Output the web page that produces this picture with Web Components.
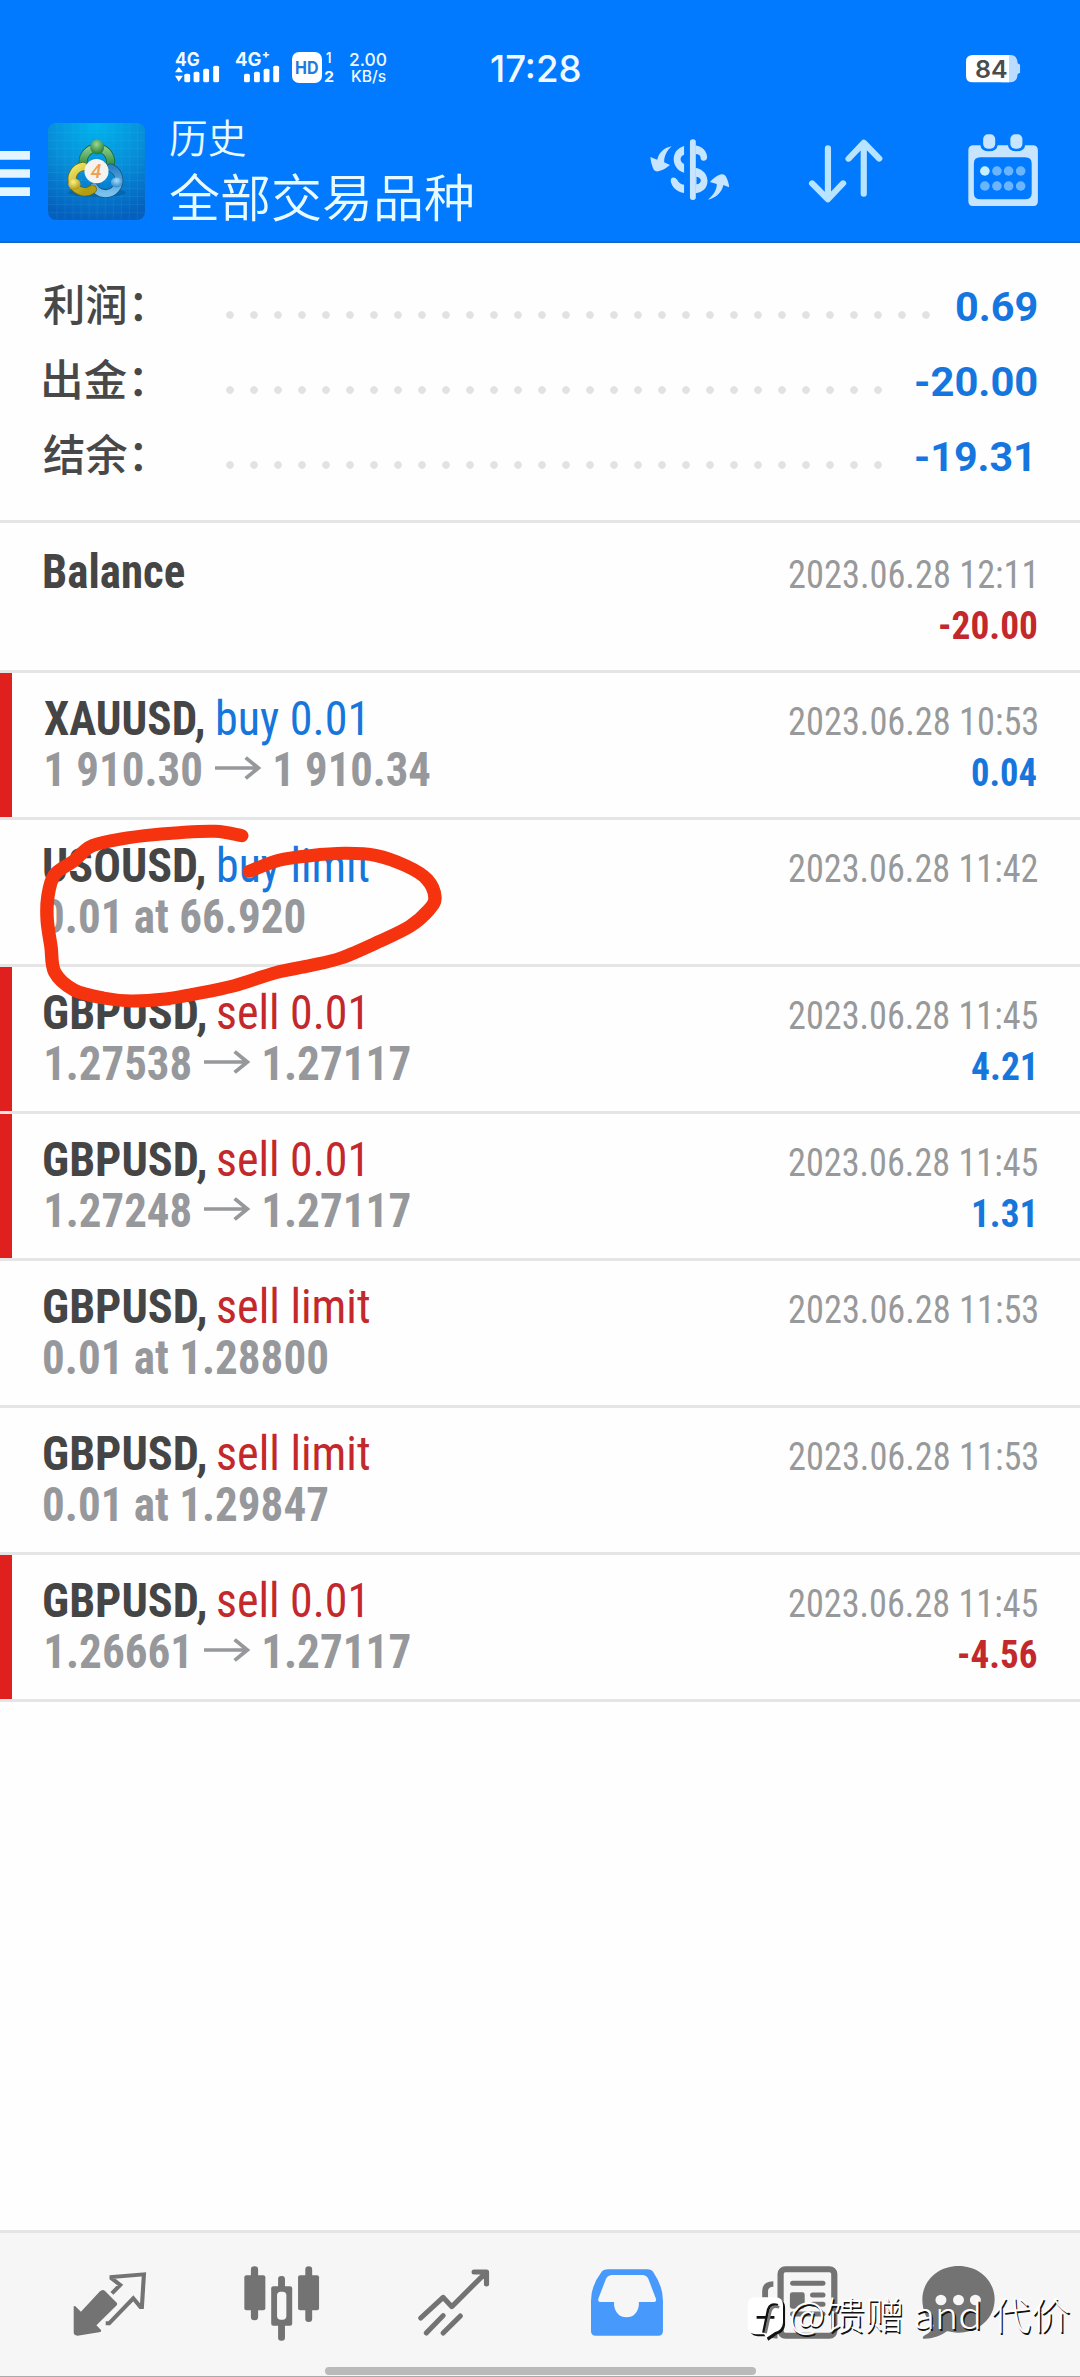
<!DOCTYPE html>
<html lang="zh-CN">
<head>
<meta charset="utf-8">
<title>历史</title>
<style>
html,body{margin:0;background:#fefefe}
body{width:1080px;height:2377px;overflow:hidden;font-family:Roboto,"Noto Sans CJK SC",sans-serif}
</style>
</head>
<body>
<history-app></history-app>
<script>
const mk = (name, html, ready) => customElements.define(name, class extends HTMLElement {
  connectedCallback() {
    if (this.shadowRoot) return;
    const t = document.createElement('template');
    t.innerHTML = typeof html === 'function' ? html(this) : html;
    this.attachShadow({mode: 'open'}).append(t.content.cloneNode(true));
    if (ready) ready(this);
  }
});

/* Text whose inked width is exactly w px; the host's bottom edge is the baseline. */
const ctx = document.createElement('canvas').getContext('2d');
mk('fit-text', e => {
  const g = (k, d) => e.getAttribute(k) || d;
  const size = +g('size', 40), cap = +g('cap', size * .711), w = +g('w', 100);
  const family = g('family', 'Roboto') + ',"Noto Sans CJK SC",sans-serif';
  const weight = g('weight', 400), stretch = g('stretch', 'normal');
  ctx.font = `${weight} ${size}px ${family}`;
  ctx.fontStretch = stretch;
  const m = ctx.measureText(e.textContent);
  const ink = m.actualBoundingBoxLeft + m.actualBoundingBoxRight;
  const s = w / ink, base = size / 2 + (m.fontBoundingBoxAscent - m.fontBoundingBoxDescent) / 2;
  return `<style>:host{display:block;flex:none;width:${w}px;height:${cap}px}
  span{display:block;width:max-content;white-space:nowrap;font:${weight} ${size}px/${size}px ${family};font-stretch:${stretch};
  transform-origin:0 0;transform:translate(${m.actualBoundingBoxLeft * s}px,${cap - base}px) scaleX(${s})}</style><span><slot></slot></span>`;
});

/* Icons: [viewBox, width, height, markup]; the view boxes use 2.904 x 3 units per pixel. */
const K = 2.904;
const bars = (xs) => xs.map((x, i) => `<rect x="${x}" y="${[132,126,117,108][i]}" width="17" height="${158-[132,126,117,108][i]}" rx="5"/>`).join('');
const ICONS = {
  sig1: [508,106,128,52, `<g fill="#fff">${bars([535,562,590,619])}<path d="M519 112L531 128H508ZM508 138H531L519 156Z"/></g>`],
  sig2: [708,106,102,52, `<g fill="#fff">${bars([708,737,765,793])}</g>`],
  menu: [0,362,87,136, `<path fill="#e3f5ff" d="M0 362H87V388H0ZM0 417H87V442H0ZM0 471H87V497H0Z"/>`],
  battery: [1237,75,157,82, `<path fill="#b9dcff" d="M1340 75H1366Q1386 75 1387 100L1394 104V128L1387 132Q1386 157 1366 157H1340Z"/><path fill="#fff" d="M1257 75H1362V157H1257Q1237 157 1237 137V95Q1237 75 1257 75Z"/>`],
  money: [320,326,230,184, `<g fill="#c8e5ff"><rect x="436" y="327" width="17" height="182" rx="8"/>
    <path d="M383 348C362 352 346 366 341 388L321 380C323 395 325 407 331 418Q335 424 344 423C357 420 368 413 378 404L361 396C361 378 368 362 383 348Z"/>
    <path d="M488 508C510 503 528 489 533 464L550 471C549 460 546 449 540 438Q537 431 527 432C516 435 504 443 494 455L514 461C514 479 505 494 488 508Z"/>
    <path d="M419 347V373C406 377 405 394 419 401V427C381 416 377 359 419 347Z"/>
    <path d="M382 444Q390 438 399 448Q405 461 419 463V488C398 485 382 468 380 451Z"/>
    <path d="M452 345C472 349 486 363 486 382Q484 392 474 391Q466 390 467 381Q464 371 452 371Z"/>
    <path fill-rule="evenodd" d="M452 412C474 417 487 432 487 452C487 473 473 486 452 489ZM455 439V462C472 460 472 441 455 439Z"/></g>`],
  sort: [782,326,214,192, `<g fill="none" stroke="#b8e4ff" stroke-width="18" stroke-linecap="round" stroke-linejoin="round"><path d="M837 354V505M791 459L837 507L881 459"/><path d="M941 490V338M897 385L941 337L986 385"/></g>`],
  calendar: [1242,311,204,216, `<path fill="#c8e5ff" fill-rule="evenodd" d="M1256 345H1278Q1280 363 1303 363Q1326 363 1328 345H1358Q1360 363 1383 363Q1406 363 1408 345H1432Q1445 346 1445 360V512Q1445 527 1432 527H1256Q1243 527 1243 512V360Q1243 346 1256 345ZM1278 381Q1259 381 1259 400V488Q1259 507 1278 507H1408Q1427 507 1427 488V400Q1427 381 1408 381Z"/>
    <g fill="#c8e5ff"><rect x="1286" y="312" width="35" height="43" rx="14"/><rect x="1365" y="312" width="35" height="43" rx="14"/></g>
    <g fill="#6bb5ff"><circle cx="1291" cy="422" r="14" fill="#c5f0ff"/><circle cx="1326" cy="422" r="14"/><circle cx="1360" cy="422" r="14"/><circle cx="1395" cy="422" r="14"/><circle cx="1291" cy="467" r="14"/><circle cx="1326" cy="467" r="14"/><circle cx="1360" cy="467" r="14"/><circle cx="1395" cy="467" r="14"/></g>`],
  arrow: [0,0,134,72, `<path d="M0 36H125M89 5L126 36L89 67" fill="none" stroke="#96989b" stroke-width="11" stroke-linejoin="miter"/>`],
  quotes: [213,184,214,192, `<path fill="#737373" d="M299 238Q302 237 306 241L340 276Q343 280 340 284L281 344L295 359L293 364L226 375Q215 375 215 365V287L219 286L236 303L292 241Z"/>
    <path fill="none" stroke="#737373" stroke-width="12" d="M326 248L350 223L325 203V199L419 191L413 289H409L388 263L318 338H308"/>`],
  candles: [708,166,220,224, `<g fill="#737373"><rect x="728" y="167" width="21" height="162" rx="10"/><rect x="709" y="194" width="61" height="105" rx="6"/><rect x="886" y="167" width="20" height="167" rx="10"/><rect x="865" y="194" width="61" height="105" rx="6"/><rect x="807" y="196" width="20" height="194" rx="9"/><rect x="787" y="227" width="61" height="118" rx="6"/></g><rect x="804" y="243" width="27" height="84" rx="11" fill="#f6f6f6"/>`],
  trend: [1213,176,207,200, `<g fill="none" stroke="#737373" stroke-width="15" stroke-linecap="round" stroke-linejoin="round"><path d="M1221 323L1286 261L1311 289L1410 187M1376 185H1412V221"/><path d="M1237 368L1286 316M1286 368L1336 317"/></g>`],
  inbox: [147,176,210,200, `<path fill="#479afc" fill-rule="evenodd" d="M196 177H310Q323 177 329 187Q356 228 356 271V362Q356 376 342 376H161Q147 376 147 362V271Q147 226 176 187Q183 177 196 177ZM207 194Q195 195 190 207L169 263Q165 275 174 275H214V285Q219 320 250 321Q281 320 286 285V275H327Q339 275 335 264L314 207Q309 195 298 194Z"/>`],
  news: [645,166,220,220, `<g fill="none" stroke="#737373"><rect x="699" y="176" width="156" height="199" rx="14" stroke-width="18"/><path stroke-width="15" stroke-linecap="round" d="M734 218H822M792 253H822M792 281H822M734 310H822"/><path stroke-width="17" d="M678 220Q654 220 654 242V355Q654 375 690 375"/></g><rect x="726" y="245" width="43" height="49" rx="7" fill="#737373"/>`],
  chat: [1108,166,212,220, `<path fill="#737373" d="M1214 166C1275 166 1319 211 1319 266C1319 325 1270 366 1214 366C1200 366 1190 363 1180 362C1160 378 1135 385 1112 384Q1108 381 1113 376C1130 368 1138 357 1142 344C1120 327 1109 298 1109 266C1109 211 1154 166 1214 166Z"/><g fill="#f6f6f6"><circle cx="1163" cy="268" r="16"/><circle cx="1214" cy="268" r="16"/><circle cx="1263" cy="268" r="16"/></g>`]
};
mk('tf-icon', e => {
  const [x, y, w, h, body] = ICONS[e.getAttribute('name')];
  return `<style>:host{display:block;flex:none;width:${w / K}px;height:${h / 3}px}svg{display:block;overflow:visible}</style>
  <svg width="${w / K}" height="${h / 3}" viewBox="${x} ${y} ${w} ${h}" preserveAspectRatio="none">${body}</svg>`;
});

mk('app-logo', () => {
  const grid = [80,104,128,152,176,200,224,248,272,296,320].map(v => `M${v} 38V328M53 ${v - 14}H343`).join('');
  return `<style>:host{display:block;flex:none;width:97px;height:97px}svg{display:block}</style>
<svg width="97" height="97" viewBox="53 38 290 290">
<defs><radialGradient id="bg" cx=".5" cy="0" r="1"><stop offset="0" stop-color="#00b4ee"/><stop offset=".5" stop-color="#078fd9"/><stop offset="1" stop-color="#0560bd"/></radialGradient>
<linearGradient id="g" x2="0" y2="1"><stop offset="0" stop-color="#8ac98b"/><stop offset="1" stop-color="#1c8433"/></linearGradient>
<linearGradient id="y" x2=".6" y2="1"><stop offset="0" stop-color="#efe86a"/><stop offset="1" stop-color="#b39d10"/></linearGradient>
<linearGradient id="b" x2="0" y2="1"><stop offset="0" stop-color="#2c83c4"/><stop offset="1" stop-color="#79c2ee"/></linearGradient>
<radialGradient id="g2" cx=".45" cy=".3" r=".7"><stop offset="0" stop-color="#9bd795"/><stop offset="1" stop-color="#1f7a2e"/></radialGradient>
<radialGradient id="y2" cx=".4" cy=".3" r=".7"><stop offset="0" stop-color="#fff08a"/><stop offset="1" stop-color="#b39a12"/></radialGradient>
<radialGradient id="b2" cx=".5" cy=".3" r=".7"><stop offset="0" stop-color="#a6defa"/><stop offset="1" stop-color="#2f86ca"/></radialGradient></defs>
<rect x="53" y="38" width="290" height="290" rx="24" fill="url(#bg)"/>
<path d="${grid}" stroke="#5fd0ff" stroke-opacity=".16" stroke-width="2"/>
<ellipse cx="200" cy="246" rx="86" ry="14" fill="#024a80" opacity=".4"/>
<g fill="none" stroke-linecap="round">
<path d="M160 166A41 41 0 1 1 236 172" stroke="#186b3b" stroke-width="27"/><path d="M160 166A41 41 0 1 1 236 172" stroke="url(#g)" stroke-width="22"/>
<path d="M240 172A40 40 0 1 1 190 228" stroke="#15598d" stroke-width="26"/><path d="M240 172A40 40 0 1 1 190 228" stroke="url(#b)" stroke-width="21"/>
<path d="M158 168A38 38 0 1 0 186 236" stroke="#6f6b1c" stroke-width="27"/><path d="M158 168A38 38 0 1 0 186 236" stroke="url(#y)" stroke-width="22"/></g>
<ellipse cx="200" cy="110" rx="21" ry="22" fill="url(#g2)"/><ellipse cx="132" cy="221" rx="18" ry="17" fill="url(#y2)"/><ellipse cx="258" cy="216" rx="17" ry="15" fill="url(#b2)"/>
<circle cx="198" cy="182" r="36" fill="#f5f3f0"/>
<text x="197" y="202" font-family="Roboto" font-weight="500" font-style="italic" font-size="58" fill="#f0a050" text-anchor="middle">4</text></svg>`;
});

mk('status-bar', `<style>:host{display:flex;height:60.7px;padding:52px 0 0 175px;color:#f1f9ff;align-items:flex-start}
.sig{display:flex;flex-direction:column}.a{margin-top:1.3px;height:13.3px}
.hd{box-sizing:border-box;width:30px;height:30.5px;border-radius:7px;background:#fff;color:#1f7be0;padding:8.8px 0 0 4px;margin-left:12.7px}
.n{width:10px;margin-left:2px;padding-top:.7px}.n fit-text:first-child{margin:0 0 7.7px 2.5px}
.kb{margin:1.7px 0 0 16px}.kb fit-text+fit-text{margin:5px 0 0 2px}
.t{margin:4.2px 0 0 104.5px}
.bat{display:grid;margin:3px 0 0 386px}.bat>*{grid-area:1/1}.bat fit-text{margin:5.8px 0 0 10.6px;color:#4b4b4b}</style>
<div class="sig"><fit-text class="a" w="24" size="18.3" cap="13.3" weight="700" family="Inter">4G</fit-text><tf-icon name="sig1" style="margin-top:-1.3px"></tf-icon></div>
<div class="sig" style="margin-left:16px"><fit-text class="a" w="34.6" size="18.3" cap="13.3" weight="700" family="Inter">4G⁺</fit-text><tf-icon name="sig2" style="margin:-1.3px 0 0 9px"></tf-icon></div>
<div class="hd"><fit-text w="22" size="17.4" cap="12.7" weight="700" family="Inter">HD</fit-text></div>
<div class="n"><fit-text w="4.6" size="14" cap="10.6" weight="600" family="Inter">1</fit-text><fit-text w="9.6" size="15" cap="11" weight="700" family="Inter">2</fit-text></div>
<div class="kb"><fit-text w="36.7" size="17.5" cap="12.7" weight="500" family="Inter">2.00</fit-text><fit-text w="33.8" size="15.5" cap="11.3" weight="500" family="Inter">KB/s</fit-text></div>
<fit-text class="t" w="88.6" size="36.5" cap="26.4" weight="500" family="Inter">17:28</fit-text>
<div class="bat"><tf-icon name="battery"></tf-icon><fit-text w="30.6" size="24" cap="17.3" weight="600" family="Inter">84</fit-text></div>`);

mk('app-header', `<style>:host{display:block;box-sizing:border-box;height:243px;background:#017aff;border-bottom:2px solid #0f6cc9;overflow:hidden;color:#e8faff}
.bar{display:flex;align-items:flex-start}
.titles{margin-left:25px;width:303px}.titles fit-text+fit-text{margin-top:26px}</style>
<status-bar></status-bar>
<div class="bar"><tf-icon name="menu" style="margin-top:38px"></tf-icon><app-logo style="margin:10px 0 0 17.6px"></app-logo>
<div class="titles"><fit-text w="75" size="39.5" cap="40.5" weight="350">历史</fit-text><fit-text w="302.4" size="51.5" cap="38.5" weight="350">全部交易品种</fit-text></div>
<tf-icon name="money" style="margin:26px 0 0 177.6px"></tf-icon><tf-icon name="sort" style="margin:26px 0 0 79.8px"></tf-icon><tf-icon name="calendar" style="margin:21px 0 0 84.7px"></tf-icon></div>`);

mk('summary-line', e => `<style>:host{display:flex;height:75px;align-items:flex-start;padding:0 43.5px;color:#484848}
.dots{height:8px;width:${e.getAttribute('dots') * 24}px;margin:27px 0 0 76px;background:radial-gradient(circle at 50% 50%,#e2e2e2 3.4px,transparent 4.3px) 0 0/24px 8px}
.v{margin-left:auto;color:#1676e0}</style>
<fit-text w="98.5" size="43" cap="37.5" weight="500">${e.getAttribute('label')}</fit-text><div class="dots"></div>
<fit-text class="v" w="${e.getAttribute('w')}" size="41.5" cap="37.3" weight="700" style="margin-right:${e.getAttribute('mr') || 0}px"><slot></slot>${e.getAttribute('value')}</fit-text>`);

mk('deal-row', e => {
  const a = k => e.getAttribute(k);
  const kind = a('kind') || '', col = kind.startsWith('buy') ? '#1676dc' : '#c3282c';
  const p = a('profit');
  const from = a('from');
  return `<style>:host{display:grid;box-sizing:border-box;height:147px;grid-template-columns:1fr auto;border-bottom:3px solid #e5e5e5;${a('bar') !== null ? 'box-shadow:inset 12px 0 #e01f1f;' : ''}padding:29.5px 43.5px 0}
  .l{display:flex}.l2{margin-top:17px}.r{display:flex;flex-direction:column;align-items:flex-end}
  .s{color:#454545}.k{color:${col};margin-left:${a('gap') || 13}px}.p{color:#96989b}.d{color:#97999b;margin-top:0}.v{margin-top:23px;color:${p && p[0] === '-' ? '#c3282c' : '#1676dc'}}</style>
  <div><div class="l"><fit-text class="s" w="${a('sw') || 161}" size="47.5" cap="33.5" weight="700" stretch="condensed">${a('symbol')}</fit-text>
  ${kind ? `<fit-text class="k" w="${a('kw')}" size="47.5" cap="33.5" stretch="condensed">${kind}</fit-text>` : ''}</div>
  <div class="l l2">${from ? `<fit-text class="p" style="margin-left:2.3px" w="${a('fw')}" size="47.5" cap="33.5" weight="700" stretch="condensed">${from}</fit-text>` : ''}
  ${a('to') ? `<tf-icon name="arrow" style="margin:3.5px 14px 0 ${a('ag') || 14}px"></tf-icon><fit-text class="p" w="${a('tw')}" size="47.5" cap="33.5" weight="700" stretch="condensed">${a('to')}</fit-text>` : ''}
  ${a('at') ? `<fit-text class="p" w="${a('aw')}" size="47.5" cap="33.5" weight="700" stretch="condensed">${a('at')}</fit-text>` : ''}</div></div>
  <div class="r"><fit-text class="d" style="margin-right:${a('dr') || 0}px" w="${a('dw') || 248}" size="39.5" cap="33.5" stretch="condensed">${a('date')}</fit-text>
  ${p ? `<fit-text class="v" style="margin-right:${a('pr') || 0}px" w="${a('pw')}" size="38.5" cap="27.5" weight="700" stretch="condensed">${p}</fit-text>` : ''}</div>`;
});

mk('tab-bar', `<style>:host{display:block;box-sizing:border-box;height:147.5px;background:#f6f6f6;border-top:3px solid #e5e5e5;border-bottom:1.5px solid #aaa}
.i{display:flex;align-items:flex-start;height:134px}.h{width:431px;height:8px;border-radius:4px;background:#bababa;margin-left:324.6px}</style>
<div class="i"><tf-icon name="quotes" style="margin:39px 0 0 73.4px"></tf-icon><tf-icon name="candles" style="margin:33px 0 0 96.7px"></tf-icon><tf-icon name="trend" style="margin:36px 0 0 98.2px"></tf-icon><tf-icon name="inbox" style="margin:36px 0 0 101.6px"></tf-icon><tf-icon name="news" style="margin:33px 0 0 99.2px"></tf-icon><tf-icon name="chat" style="margin:33px 0 0 83.7px"></tf-icon></div><div class="h"></div>`);

/* Freehand marker loop drawn over the list. */
mk('marker-loop', () => {
  const p = [[702,527],[625,514],[520,518],[420,527],[330,541],[262,560],[215,602],[158,645],[139,710],[137,780],[148,860],[159,937],[215,990],[300,1014],[380,1023],[480,1017],[560,1003],[680,977],[800,938],[900,917],[990,894],[1100,845],[1190,799],[1245,750],[1263,712],[1240,658],[1180,618],[1090,586],[1000,580],[900,587],[810,601],[724,634]];
  let d = `M${p[0]}`;
  for (let i = 0; i < p.length - 1; i++) {
    const a = p[i - 1] || p[i], b = p[i], c = p[i + 1], e = p[i + 2] || c;
    d += `C${b[0] + (c[0] - a[0]) / 6} ${b[1] + (c[1] - a[1]) / 6} ${c[0] - (e[0] - b[0]) / 6} ${c[1] - (e[1] - b[1]) / 6} ${c}`;
  }
  return `<style>:host{position:absolute;left:0;top:660px;pointer-events:none}svg{display:block}</style><svg width="540" height="440" viewBox="0 0 1568 1320" preserveAspectRatio="none"><path d="${d}" fill="none" stroke="#f5330f" stroke-width="39" stroke-linecap="round" stroke-linejoin="round"/></svg>`;
});

mk('author-mark', `<style>:host{position:absolute;left:746.6px;top:2296px;display:flex;color:#fff;pointer-events:none}
svg{display:block;overflow:visible}.t{margin-left:8px;text-shadow:1.3px 1.3px 0 #111}</style>
<svg width="36" height="44" viewBox="600 258 105 132" preserveAspectRatio="none"><path transform="translate(6 5)" fill="#111" d="M622 264H685Q705 266 705 286V340Q703 362 682 368L656 387L650 374H625Q602 372 602 350V285Q603 266 622 264Z"/><path fill="#fff" d="M622 262H685Q705 264 705 286V338Q703 360 682 366L656 384L650 373H625Q602 370 602 348V285Q603 264 622 262Z"/><path fill="none" stroke="#111" stroke-width="8" d="M690 286Q668 278 662 298L648 368M628 322H680"/><path fill="none" stroke="#777" stroke-width="8" d="M694 292Q674 284 668 304L654 370"/></svg>
<fit-text class="t" w="279" size="37.5" cap="33.7" weight="300" family="'Noto Sans CJK SC'">@馈赠 and 代价</fit-text>`);

mk('history-app', `<style>:host{display:flex;flex-direction:column;position:relative;width:1080px;height:2377px;overflow:hidden;background:#fefefe}
.sum{box-sizing:border-box;height:279.5px;padding-top:40.5px;border-bottom:3px solid #e5e5e5}tab-bar{margin-top:auto}</style>
<app-header></app-header>
<div class="sum"><summary-line label="利润：" dots="30" w="80.5" value="0.69"></summary-line><summary-line label="出金：" dots="28" w="120.5" value="-20.00"></summary-line><summary-line label="结余：" dots="28" w="114" mr="6.5" value="-19.31"></summary-line></div>
<deal-row style="height:150px;padding-top:32.5px" symbol="Balance" sw="140.5" date="2023.06.28 12:11" dw="244.5" dr="3.5" profit="-20.00" pw="96.5"></deal-row>
<deal-row bar symbol="XAUUSD," sw="159" kind="buy 0.01" kw="144" gap="15.1" from="1 910.30" fw="155" to="1 910.34" tw="155" date="2023.06.28 10:53" profit="0.04" pw="64.5"></deal-row>
<deal-row symbol="USOUSD," sw="160" kind="buy limit" kw="150" gap="15.5" at="0.01 at 66.920" aw="260.3" date="2023.06.28 11:42"></deal-row>
<deal-row bar symbol="GBPUSD," kind="sell 0.01" kw="144" from="1.27538" fw="144.3" to="1.27117" tw="145.3" date="2023.06.28 11:45" profit="4.21" pw="61.5" pr="3.5"></deal-row>
<deal-row bar symbol="GBPUSD," kind="sell 0.01" kw="144" from="1.27248" fw="144.3" to="1.27117" tw="145.3" date="2023.06.28 11:45" profit="1.31" pw="60" pr="3.5"></deal-row>
<deal-row symbol="GBPUSD," kind="sell limit" kw="151.5" at="0.01 at 1.28800" aw="283" date="2023.06.28 11:53"></deal-row>
<deal-row symbol="GBPUSD," kind="sell limit" kw="151.5" at="0.01 at 1.29847" aw="283" date="2023.06.28 11:53"></deal-row>
<deal-row bar symbol="GBPUSD," kind="sell 0.01" kw="144" from="1.26661" fw="140.5" ag="17.8" to="1.27117" tw="145.3" date="2023.06.28 11:45" profit="-4.56" pw="78"></deal-row>
<tab-bar></tab-bar><marker-loop></marker-loop><author-mark></author-mark>`);
</script>
</body>
</html>
